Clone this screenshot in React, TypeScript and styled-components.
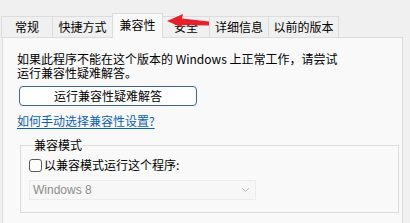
import React from "react";
import styled, { createGlobalStyle } from "styled-components";

const Global = createGlobalStyle`
  html, body { margin: 0; padding: 0; }
  body { background: #f0f0f0; }
`;

const FONT = `"Noto Sans CJK SC", "Noto Sans", "Liberation Sans", sans-serif`;

const Window = styled.div`
  position: relative;
  width: 410px;
  height: 223px;
  box-sizing: border-box;
  background: #f0f0f0;
  padding: 14px 0 0 2px;
  display: flex;
  flex-direction: column;
  font-family: ${FONT};
  font-size: 12px;
  color: #000;
  overflow: hidden;
`;

const TabBar = styled.div`
  display: flex;
  align-items: flex-end;
  height: 24px;
  position: relative;
  z-index: 1;
  margin-bottom: -1px;
`;

const Tab = styled.div<{ $active?: boolean; $w: number }>`
  box-sizing: border-box;
  width: ${(p) => p.$w}px;
  height: ${(p) => (p.$active ? 25 : 22)}px;
  display: flex;
  align-items: center;
  justify-content: center;
  padding-bottom: ${(p) => (p.$active ? 2 : 0)}px;
  border: 1px solid #dcdcdc;
  border-bottom: ${(p) => (p.$active ? "none" : "1px solid #dcdcdc")};
  margin-left: -1px;
  background: ${(p) => (p.$active ? "#f9f9f9" : "#f0f0f0")};
  color: #000;
  font-size: 12px;
  line-height: 1;
  white-space: nowrap;
`;

const Panel = styled.div`
  flex: 1;
  width: 401px;
  box-sizing: border-box;
  background: #f9f9f9;
  border: 1px solid #dcdcdc;
  border-bottom: none;
  padding: 14px 3px 0 14px;
  display: flex;
  flex-direction: column;
  align-items: flex-start;
`;

const Desc = styled.p`
  margin: 0;
  font-size: 12px;
  line-height: 14px;
`;

const Line = styled.span`
  display: block;
`;

const Button = styled.button`
  margin: 6px 0 0 2px;
  width: 178px;
  height: 20px;
  box-sizing: border-box;
  background: #fefefe;
  border: 1px solid #3c6690;
  border-radius: 4px;
  font-family: ${FONT};
  font-size: 12px;
  line-height: 1;
  color: #000;
  padding: 0;
`;

const Link = styled.a`
  margin-top: 8px;
  font-size: 12px;
  line-height: 14px;
  color: #0b5fb8;
  text-decoration: underline;
  text-underline-offset: 2px;
`;

const Group = styled.fieldset`
  align-self: stretch;
  margin: 10px 0 0 3px;
  padding: 6px 0 0 8px;
  border: 1px solid #dcdcdc;
  border-radius: 0;
  height: 75px;
  box-sizing: border-box;
  display: flex;
  flex-direction: column;
  align-items: flex-start;
  gap: 8px;
`;

const Legend = styled.legend`
  padding: 0 1px;
  margin-left: 4px;
  font-size: 12px;
  line-height: 14px;
`;

const CheckRow = styled.label`
  display: flex;
  align-items: center;
  gap: 2px;
  font-size: 12px;
  line-height: 14px;
`;

const Box = styled.span`
  width: 13px;
  height: 13px;
  box-sizing: border-box;
  border: 1px solid #5a5a5a;
  border-radius: 3px;
  background: #fdfdfd;
`;

const Select = styled.div`
  width: 227px;
  height: 20px;
  box-sizing: border-box;
  border: 1px solid #ececec;
  background: #f7f7f7;
  display: flex;
  align-items: center;
  justify-content: space-between;
  padding: 0 5px 0 3px;
  font-family: "Liberation Sans", Arial, sans-serif;
  font-size: 12px;
  color: #8c8c8c;
`;

const ArrowSvg = styled.svg`
  position: absolute;
  left: 0;
  top: 0;
  z-index: 2;
  pointer-events: none;
`;

export default function App() {
  const tabs = [
    { t: "常规", w: 52 },
    { t: "快捷方式", w: 61 },
    { t: "兼容性", w: 51, active: true },
    { t: "安全", w: 48 },
    { t: "详细信息", w: 60 },
    { t: "以前的版本", w: 71 },
  ];
  return (
    <>
      <Global />
      <Window>
        <TabBar>
          {tabs.map((x) => (
            <Tab key={x.t} $w={x.w} $active={x.active}>
              {x.t}
            </Tab>
          ))}
        </TabBar>
        <Panel>
          <Desc>
            <Line>如果此程序不能在这个版本的 Windows 上正常工作，请尝试</Line>
            <Line>运行兼容性疑难解答。</Line>
          </Desc>
          <Button>运行兼容性疑难解答</Button>
          <Link href="#">如何手动选择兼容性设置?</Link>
          <Group>
            <Legend>兼容模式</Legend>
            <CheckRow>
              <Box />
              以兼容模式运行这个程序:
            </CheckRow>
            <Select>
              <span>Windows 8</span>
              <svg width="9" height="6" viewBox="0 0 9 6">
                <path d="M1 1 L4.5 4.5 L8 1" fill="none" stroke="#b5b5b5" strokeWidth="1" />
              </svg>
            </Select>
          </Group>
        </Panel>
        <ArrowSvg width="410" height="40" viewBox="0 0 410 40">
          <polygon
            points="167,21 183,14 182,18.5 209,21.5 209,25.5 182,25 183,28"
            fill="#e8202a"
          />
        </ArrowSvg>
      </Window>
    </>
  );
}
